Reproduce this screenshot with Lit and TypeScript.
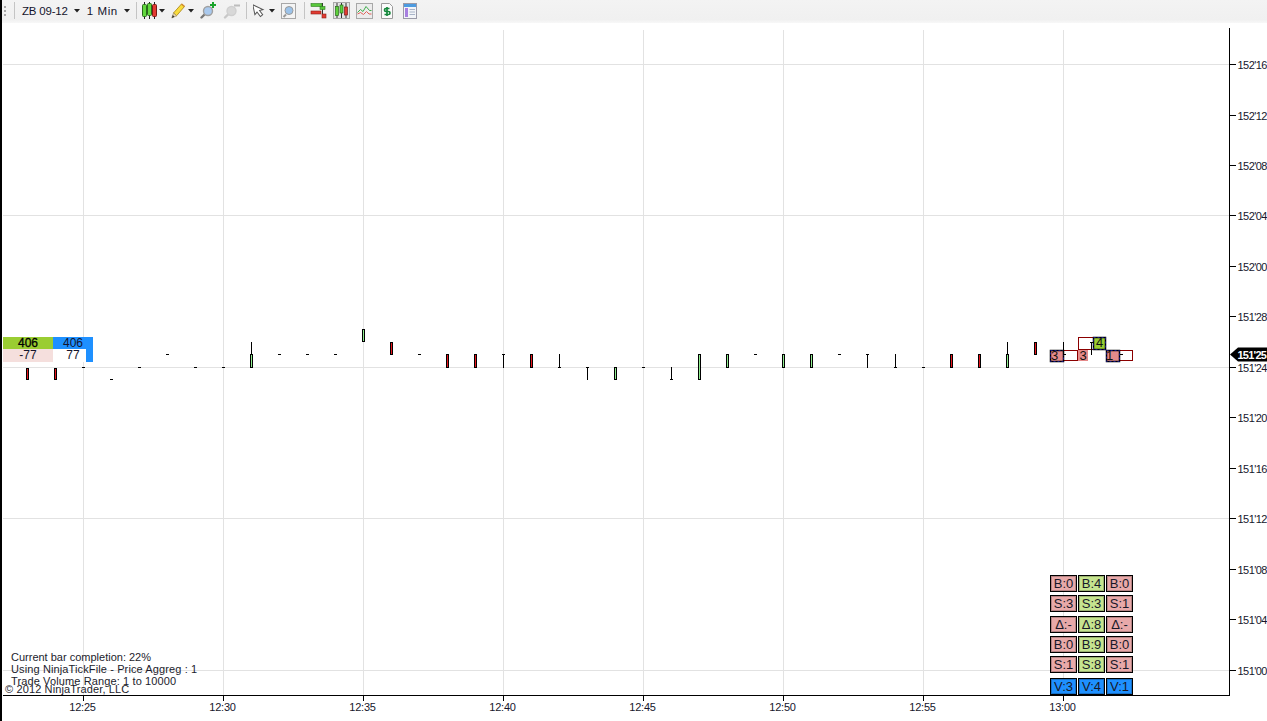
import { html, css, svg, LitElement } from 'lit';
import { customElement } from 'lit/decorators.js';

const TIMES = ['12:25', '12:30', '12:35', '12:40', '12:45', '12:50', '12:55', '13:00'];
const PRICES = ["152'16", "152'12", "152'08", "152'04", "152'00", "151'28", "151'24", "151'20", "151'16", "151'12", "151'08", "151'04", "151'00"];
const PRICE_Y = [64, 115, 165, 215, 266, 316, 367, 417, 468, 518, 569, 619, 670];
const STRONG_LINES = [64, 215, 367, 518, 670];

// [x, kind, top, bottom] - kind: r/g body, d dash, t/b wick with a top or bottom tick, w plain wick
const BARS: [number, string, number, number][] = [
  [27, 'r', 368, 380], [55, 'r', 368, 380], [83, 'd', 367, 367], [111, 'd', 379, 379],
  [139, 'd', 367, 367], [167, 'd', 354, 354], [195, 'd', 367, 367], [223, 'd', 367, 367],
  [251, 'w', 342, 355], [251, 'g', 354, 368], [279, 'd', 354, 354], [307, 'd', 354, 354],
  [335, 'd', 354, 354], [363, 'g', 329, 342], [391, 'r', 342, 355], [419, 'd', 354, 354],
  [447, 'r', 354, 368], [475, 'r', 354, 368], [503, 't', 354, 368], [531, 'r', 354, 368],
  [559, 'b', 354, 368], [587, 't', 367, 380], [615, 'g', 367, 380], [643, 'd', 367, 367],
  [671, 'b', 367, 380], [699, 'g', 354, 380], [727, 'g', 354, 368], [755, 'd', 354, 354],
  [783, 'g', 354, 368], [811, 'g', 354, 368], [839, 'd', 354, 354], [867, 't', 354, 368],
  [895, 'b', 354, 368], [923, 'd', 367, 367], [951, 'r', 354, 368], [979, 'r', 354, 368],
  [1007, 'w', 342, 355], [1007, 'g', 354, 368], [1035, 'r', 342, 355],
  [1063, 'w', 342, 355], [1064, 'd', 354, 354], [1091, 't', 342, 355], [1121, 'd', 354, 354],
];

// footprint boxes next to the last three bars
const OUTLINES = [[1063.5, 350.5, 14, 10], [1078.5, 337.5, 15, 12], [1119.5, 350.5, 13, 10]];
const TRADE_BOXES: [number, number, number, number, string, string, number][] = [
  [1050, 350, 13, 11, '#e58a8a', '3', 1051],
  [1093, 337, 12, 12, '#9acd32', '4', 1096],
  [1106, 350, 13, 11, '#e58a8a', '1', 1106],
];

const CELLS = [
  { gap: 'first', cells: [['B:0', 'sell'], ['B:4', 'buy'], ['B:0', 'sell']] },
  { gap: 'g3', cells: [['S:3', 'sell'], ['S:3', 'buy'], ['S:1', 'sell']] },
  { gap: 'g4', cells: [['Δ:-', 'sell'], ['Δ:8', 'buy'], ['Δ:-', 'sell']] },
  { gap: 'g3', cells: [['B:0', 'sell'], ['B:9', 'buy'], ['B:0', 'sell']] },
  { gap: 'g3', cells: [['S:1', 'sell'], ['S:8', 'buy'], ['S:1', 'sell']] },
  { gap: 'g5', cells: [['V:3', 'vol'], ['V:4', 'vol'], ['V:1', 'vol']] },
];

const caret = html`<svg class="caret" width="6" height="4" viewBox="0 0 6 4"><path d="M0 0h6L3 3.5z" fill="#222" /></svg>`;
const sep = html`<span class="sep"></span>`;

@customElement('app-toolbar')
export class AppToolbar extends LitElement {
  static override styles = css`
    :host {
      display: flex;
      align-items: center;
      height: 23px;
      background: linear-gradient(#f3f3f3, #f0f0f0 85%, #f8f8f8);
      font: 11.5px 'Liberation Sans', Arial, sans-serif;
      color: #14142c;
      padding: 0 0 2px 3px;
      box-sizing: border-box;
    }
    .grip {
      width: 2px;
      height: 10px;
      margin: 0 8px 0 1px;
      background: repeating-linear-gradient(#a8a8a8 0 2px, transparent 2px 4px);
    }
    .sep {
      display: block;
      width: 1px;
      height: 17px;
      background: #c4c4c4;
    }
    .label {
      white-space: nowrap;
      letter-spacing: -0.2px;
    }
    .label.wide {
      letter-spacing: 0.6px;
    }
    .caret {
      display: block;
    }
    svg {
      display: block;
      flex: none;
    }
  `;

  override render() {
    return html`
      <span class="grip"></span>
      ${sep}
      <span class="label" style="margin-left:7px">ZB 09-12</span>
      <span style="margin-left:6px">${caret}</span>
      <span class="label wide" style="margin-left:7px">1 Min</span>
      <span style="margin-left:6px">${caret}</span>
      <span style="margin-left:6px">${sep}</span>

      <svg style="margin-left:5px" width="15" height="17" viewBox="0 0 15 17">
        <path d="M2.500 0v17M7.500 0v17M12.500 0v17" stroke="#222" />
        <rect x=".5" y="2.500" width="4" height="12" rx="1" fill="#62d83e" stroke="#2a6a1c" />
        <rect x="5.500" y="1.500" width="4" height="12" rx="1" fill="#62d83e" stroke="#2a6a1c" />
        <rect x="10.500" y="2.500" width="4" height="12" rx="1" fill="#e23b32" stroke="#7a1a14" />
      </svg>
      <span style="margin-left:2px">${caret}</span>

      <svg style="margin-left:6px" width="14" height="16" viewBox="0 0 14 16">
        <path d="M2.500 10 10.500 1 13.500 3.500 5.500 12.800z" fill="#f8dc3c" stroke="#b8962a" />
        <path d="M2.500 10 .8 15 5.500 12.800z" fill="#f3e0b8" stroke="#8a7a50" stroke-width=".6" />
        <path d="M.8 15l1-3 1.800 1.700z" fill="#333" />
        <path d="M10.500 1l3 2.500" stroke="#d08a30" stroke-width="1.600" />
      </svg>
      <span style="margin-left:3px">${caret}</span>

      <svg style="margin-left:6px" width="17" height="17" viewBox="0 0 17 17">
        <path d="M1.500 15.500 6 11" stroke="#777" stroke-width="2.400" stroke-linecap="round" />
        <circle cx="8" cy="9" r="4.500" fill="#a9c9ee" stroke="#a0a0a0" stroke-width="1.400" />
        <path d="M13 0v6M10 3h6" stroke="#1aa32a" stroke-width="2" />
      </svg>

      <svg style="margin-left:6px" width="18" height="17" viewBox="0 0 18 17">
        <path d="M2 15.500 6.500 11" stroke="#c8c8c8" stroke-width="2.400" stroke-linecap="round" />
        <circle cx="8.500" cy="9" r="4.500" fill="#d8d8d8" stroke="#cfcfcf" stroke-width="1.400" />
        <path d="M11 3.500h6" stroke="#bdbdbd" stroke-width="2" />
      </svg>
      <span style="margin-left:5px">${sep}</span>

      <svg style="margin-left:6px" width="12" height="15" viewBox="0 0 12 15">
        <path d="M1 .8v10l2.600-2L6 14l2.600-1.400L6.400 7.800 10 7.600z" fill="#fff" stroke="#555" transform="rotate(-12 5 7)" />
      </svg>
      <span style="margin-left:4px">${caret}</span>

      <svg style="margin-left:6px" width="15" height="16" viewBox="0 0 15 16">
        <rect x=".5" y=".5" width="14" height="15" fill="#f4f4f4" stroke="#a8a8a8" />
        <path d="M2.500 14 5 11.500" stroke="#999" stroke-width="2" />
        <circle cx="8" cy="7.500" r="4" fill="#9cc3ea" stroke="#9a9a9a" />
      </svg>
      <span style="margin-left:8px">${sep}</span>

      <svg style="margin-left:5px" width="17" height="17" viewBox="0 0 17 17">
        <path d="M12.500 1v15" stroke="#333" />
        <rect x="1" y="1.500" width="11" height="3" fill="#58c83a" stroke="#2f7a20" stroke-width=".6" />
        <rect x="10" y="4.500" width="5" height="3" fill="#58c83a" stroke="#2f7a20" stroke-width=".6" />
        <rect x="1" y="9" width="10" height="3" fill="#e23b32" stroke="#8a2018" stroke-width=".6" />
        <rect x="12" y="12" width="4" height="4" fill="#e23b32" stroke="#8a2018" stroke-width=".6" />
      </svg>

      <svg style="margin-left:6px" width="17" height="17" viewBox="0 0 17 17">
        <rect x=".5" y=".5" width="16" height="16" fill="#e4e4e4" stroke="#a8a8a8" />
        <path d="M4 1v15M8.500 1v15M13 1v15" stroke="#333" />
        <rect x="2.500" y="4.500" width="3" height="9" fill="#5ed13c" stroke="#2a6a1c" stroke-width=".7" />
        <rect x="7" y="3" width="3" height="8" fill="#5ed13c" stroke="#2a6a1c" stroke-width=".7" />
        <rect x="11.500" y="5" width="3" height="8" fill="#e23b32" stroke="#7a1a14" stroke-width=".7" />
      </svg>

      <svg style="margin-left:6px" width="17" height="16" viewBox="0 0 17 16">
        <rect x=".5" y=".5" width="16" height="15" fill="#ececec" stroke="#a8a8a8" />
        <path d="M1.500 9.500l3-3 2.500 2 3-5 3.500 4h2" fill="none" stroke="#3fae4c" />
        <path d="M1.500 11l3-1.500 3 2 3-3 2.500 2.500h2.500" fill="none" stroke="#e0615a" />
      </svg>

      <svg style="margin-left:8px" width="12" height="16" viewBox="0 0 12 16">
        <path d="M.5.500h8l3 3v12H.5z" fill="#fbfbfb" stroke="#9a9a9a" />
        <path d="M8.500 5.500H5a1.500 1.500 0 0 0 0 3h2.500a1.500 1.500 0 0 1 0 3H3.500M6 4v9" fill="none" stroke="#16883c" stroke-width="1.700" />
      </svg>

      <svg style="margin-left:10px" width="14" height="16" viewBox="0 0 14 16">
        <rect x=".5" y=".5" width="13" height="15" fill="#f2f4f8" stroke="#9a9aa8" />
        <rect x="1" y="1" width="12" height="3" fill="#4d9be0" />
        <rect x="2" y="5" width="3" height="9" fill="#a77fe0" />
        <path d="M6.500 6.500h5.500M6.500 9h5.500M6.500 11.500h5.500" stroke="#a8b4c8" />
      </svg>
    `;
  }
}

@customElement('app-root')
export class AppRoot extends LitElement {
  static override styles = css`
    :host {
      display: block;
      width: 1267px;
      height: 721px;
      position: relative;
      overflow: hidden;
      background: #fff;
      font-family: 'Liberation Sans', Arial, sans-serif;
    }
    .edge {
      position: absolute;
      left: 0;
      top: 0;
      bottom: 0;
      width: 2px;
      background: #000;
    }
    .chart {
      position: relative;
      height: 698px;
    }
    .plot {
      display: block;
    }
    .plot text {
      font: 11px 'Liberation Sans', Arial, sans-serif;
      fill: #16162c;
    }
    .plot text.price {
      letter-spacing: -0.55px;
    }
    .plot text.time {
      letter-spacing: -0.2px;
    }
    .plot text.tag {
      fill: #fff;
      font-weight: bold;
      letter-spacing: -0.75px;
    }
    .plot text.trade {
      font-size: 13px;
      fill: #111;
    }
    .volume {
      position: absolute;
      left: 3px;
      top: 314px;
      display: grid;
      grid-template-columns: 50px 33px 7px;
      grid-template-rows: 12px 13px;
      font-size: 12px;
      line-height: 12px;
      color: #14142c;
      text-align: center;
    }
    .volume .total-a {
      background: #9acd32;
      color: #000;
      -webkit-text-stroke: 0.3px #000;
    }
    .volume .total-b {
      grid-column: span 2;
      background: #1e90ff;
    }
    .volume .delta-a {
      background: #f5dfdd;
    }
    .volume .delta-b {
      background: #fff;
      padding-left: 7px;
    }
    .volume .delta-c {
      background: #1e90ff;
    }
    .info {
      position: absolute;
      left: 11px;
      top: 628px;
      font-size: 11px;
      line-height: 12px;
      color: #1c1c2c;
      white-space: nowrap;
    }
    .info .wide {
      letter-spacing: 0.12px;
    }
    .copy {
      position: absolute;
      left: 5px;
      top: 659px;
      font-size: 11px;
      line-height: 14px;
      letter-spacing: 0.13px;
      color: #1c1c2c;
      white-space: nowrap;
    }
    .cells {
      position: absolute;
      left: 1050px;
      top: 552px;
    }
    .row {
      display: grid;
      grid-template-columns: repeat(3, 27px);
      gap: 1px;
    }
    .row.g3 {
      margin-top: 3px;
    }
    .row.g4 {
      margin-top: 4px;
    }
    .row.g5 {
      margin-top: 5px;
    }
    .cell {
      height: 17px;
      box-sizing: border-box;
      border: 1px solid #000;
      box-shadow: inset 0 0 0 1px rgba(0, 0, 0, 0.22);
      text-align: center;
      font-size: 13px;
      line-height: 15px;
      color: #181828;
    }
    .cell.sell {
      background: #e8a9a9;
    }
    .cell.buy {
      background: #c6e48f;
    }
    .cell.vol {
      background: #1e90ff;
    }
  `;

  private renderGrid() {
    return svg`
      ${TIMES.map((_, i) => svg`<rect x=${83 + i * 140} y="30" width="1" height="665" fill="#e2e2e2" />`)}
      ${STRONG_LINES.map((y) => svg`<rect x="3" y=${y} width="1226" height="1" fill="#e2e2e2" />`)}
    `;
  }

  private renderAxes() {
    return svg`
      <rect x="3" y="695" width="1227" height="1" fill="#000" />
      <rect x="1229" y="28" width="1" height="668" fill="#000" />
      ${PRICES.map((label, i) => svg`
        <rect x="1230" y=${PRICE_Y[i]} width="6" height="1" fill="#000" />
        <text class="price" x="1237.500" y=${PRICE_Y[i] + 5}>${label}</text>
      `)}
      ${TIMES.map((label, i) => svg`
        <rect x=${83 + i * 140} y="696" width="1" height="5" fill="#000" />
        <text class="time" x=${82.5 + i * 140} y="711" text-anchor="middle">${label}</text>
      `)}
      <path d="M1230 354.500 1238 347.500H1267V361.500H1238Z" fill="#000" />
      <text class="tag" x="1237.500" y="358.500">151'25</text>
    `;
  }

  private renderBar([x, kind, top, bottom]: [number, string, number, number]) {
    if (kind === 'd') {
      return svg`<rect x=${x - 1} y=${top} width="3" height="1" fill="#000" />`;
    }
    if (kind === 'r' || kind === 'g') {
      return svg`<rect x=${x - 0.5} y=${top + 0.5} width="2" height=${bottom - top - 1}
        fill=${kind === 'r' ? '#e8141c' : '#90ee90'} stroke="#000" />`;
    }
    const tickY = kind === 't' ? top : bottom - 1;
    return svg`
      <rect x=${x} y=${top} width="1" height=${bottom - top} fill="#000" />
      ${kind === 'w' ? null : svg`<rect x=${x - 1} y=${tickY} width="3" height="1" fill="#000" />`}
    `;
  }

  private renderFootprint() {
    return svg`
      ${OUTLINES.map(([x, y, w, h]) => svg`<rect x=${x} y=${y} width=${w} height=${h} fill="none" stroke="#8b0000" />`)}
      <rect x="1078" y="350" width="10" height="11" fill="#e58a8a" />
      <text class="trade" x="1079.500" y="360">3</text>
      ${TRADE_BOXES.map(([x, y, w, h, fill, label, textX]) => svg`
        <rect x=${x + 0.5} y=${y + 0.5} width=${w} height=${h} fill=${fill} stroke="#000" stroke-width="1.500" />
        <rect x=${x + 0.5} y=${y + 0.5} width=${w} height=${h} fill="none" stroke="#2020c0" stroke-width=".7" stroke-dasharray="2 2" />
        <text class="trade" x=${textX} y=${y + 10}>${label}</text>
      `)}
    `;
  }

  override render() {
    return html`
      <app-toolbar></app-toolbar>
      <div class="chart">
        <svg class="plot" width="1267" height="698" viewBox="0 23 1267 698">
          ${this.renderGrid()}
          ${this.renderFootprint()}
          ${BARS.map((bar) => this.renderBar(bar))}
          ${this.renderAxes()}
        </svg>
        <div class="volume">
          <div class="total-a">406</div>
          <div class="total-b">406</div>
          <div class="delta-a">-77</div>
          <div class="delta-b">77</div>
          <div class="delta-c"></div>
        </div>
        <div class="info">
          <div>Current bar completion: 22%</div>
          <div class="wide">Using NinjaTickFile - Price Aggreg : 1</div>
          <div class="wide">Trade Volume Range: 1 to 10000</div>
        </div>
        <div class="copy">© 2012 NinjaTrader, LLC</div>
        <div class="cells">
          ${CELLS.map(
            (row) => html`
              <div class="row ${row.gap}">
                ${row.cells.map(([label, type]) => html`<div class="cell ${type}">${label}</div>`)}
              </div>
            `
          )}
        </div>
      </div>
      <div class="edge"></div>
    `;
  }
}
